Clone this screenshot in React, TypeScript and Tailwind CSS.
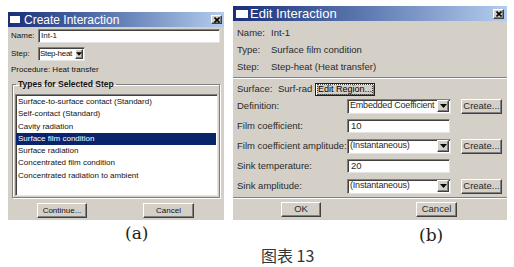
import React from "react";

const raised =
  "bg-[#d4d0c8] border border-t-white border-l-white border-r-[#404040] border-b-[#404040] shadow-[inset_-1px_-1px_0_#808080]";
const sunken =
  "bg-white border border-t-[#808080] border-l-[#808080] border-r-[#e4e4e4] border-b-[#e4e4e4] shadow-[inset_1px_1px_0_#404040]";

function Arrow({ className }: { className: string }) {
  return (
    <div className={`${raised} flex items-center justify-center shrink-0 ${className}`}>
      <svg width="7" height="4" viewBox="0 0 7 4">
        <polygon points="0,0 7,0 3.5,4" fill="#000" />
      </svg>
    </div>
  );
}

function Close({ className }: { className: string }) {
  return (
    <div className={`${raised} flex items-center justify-center shrink-0 ${className}`}>
      <svg width="6" height="6" viewBox="0 0 6 6">
        <path d="M0.5 0.5 L5.5 5.5 M5.5 0.5 L0.5 5.5" stroke="#000" strokeWidth="1.6" />
      </svg>
    </div>
  );
}

const listItems = [
  "Surface-to-surface contact (Standard)",
  "Self-contact (Standard)",
  "Cavity radiation",
  "Surface film condition",
  "Surface radiation",
  "Concentrated film condition",
  "Concentrated radiation to ambient",
];

function DialogA() {
  return (
    <div className="w-[216px] h-[208px] bg-[#d4d0c8] flex flex-col text-[8px] text-[#111]">
      <div className="h-[15px] flex items-center bg-linear-to-r from-[#1a2f78] to-[#b4cdee] pl-[2px] pr-[2px]">
        <div className="w-[10px] h-[7px] bg-white" />
        <span className="ml-[4px] text-white text-[12px] leading-none">Create Interaction</span>
        <Close className="ml-auto w-[11px] h-[9px]" />
      </div>
      <div className="flex items-center h-[14px] mt-[2px] pl-[3px] pr-[4px]">
        <span className="w-[27px]">Name:</span>
        <div className={`${sunken} flex-1 h-full flex items-center pl-[2px]`}>Int-1</div>
      </div>
      <div className="flex items-center h-[14px] mt-[4px] pl-[3px]">
        <span className="w-[27px]">Step:</span>
        <div className={`${sunken} w-[47px] h-full flex items-center pl-[1px] pr-[1px]`}>
          <span className="flex-1 whitespace-nowrap tracking-[-0.3px]">Step-heat</span>
          <Arrow className="w-[8px] h-[10px]" />
        </div>
      </div>
      <div className="h-[12px] mt-[3px] pl-[3px] flex items-center whitespace-nowrap">Procedure: Heat transfer</div>
      <fieldset className="mx-[4px] mt-[3px] border border-[#808080] shadow-[1px_1px_0_white,inset_1px_1px_0_white] pl-[2px] pr-[1px] pb-[1px] pt-0 min-w-0">
        <legend className="ml-[1px] px-[2px] text-[8.5px] font-bold leading-[10px]">Types for Selected Step</legend>
        <div className={`${sunken} h-[102px] mt-[5px] pt-[1px] pr-[1px]`}>
          {listItems.map((t, i) => (
            <div
              key={t}
              className={`h-[12.3px] leading-[12.3px] pl-[2px] whitespace-nowrap ${
                i === 3 ? "bg-[#0a246a] text-white" : ""
              }`}
            >
              {t}
            </div>
          ))}
        </div>
      </fieldset>
      <div className="flex mt-[5px] pl-[29px] gap-[56px]">
        <div className={`${raised} w-[50px] h-[15px] flex items-center justify-center whitespace-nowrap`}>Continue...</div>
        <div className={`${raised} w-[51px] h-[15px] flex items-center justify-center`}>Cancel</div>
      </div>
    </div>
  );
}

function InfoRow({ label, value }: { label: string; value: string }) {
  return (
    <div className="h-[17px] flex items-center pl-[4px] whitespace-nowrap">
      <span className="w-[34px]">{label}</span>
      <span>{value}</span>
    </div>
  );
}

function Create() {
  return (
    <div className={`${raised} ml-[10px] w-[41px] h-[15px] flex items-center justify-center whitespace-nowrap`}>Create...</div>
  );
}

function ComboRow({ label, value }: { label: string; value: string }) {
  return (
    <div className="h-[20px] flex items-center pl-[4px]">
      <span className="w-[110px] whitespace-nowrap">{label}</span>
      <div className={`${sunken} w-[104px] h-[15px] flex items-center pl-[2px] pr-[1px]`}>
        <span className="flex-1 whitespace-nowrap text-[9px] tracking-[-0.2px]">{value}</span>
        <Arrow className="w-[12px] h-[12px]" />
      </div>
      <Create />
    </div>
  );
}

function InputRow({ label, value }: { label: string; value: string }) {
  return (
    <div className="h-[20px] flex items-center pl-[4px]">
      <span className="w-[110px] whitespace-nowrap">{label}</span>
      <div className={`${sunken} w-[103px] h-[14px] flex items-center pl-[3px]`}>{value}</div>
    </div>
  );
}

function DialogB() {
  return (
    <div className="w-[274px] h-[214px] bg-[#d4d0c8] flex flex-col text-[9.5px] text-[#2a2a2a]">
      <div className="h-[15px] flex items-center bg-linear-to-r from-[#1a2f78] to-[#b4cdee] pl-[3px] pr-[3px]">
        <div className="w-[12px] h-[8px] bg-white" />
        <span className="ml-[2px] text-white text-[13px] leading-none">Edit Interaction</span>
        <Close className="ml-auto w-[11px] h-[10px]" />
      </div>
      <div className="mt-[4px]">
        <InfoRow label="Name:" value="Int-1" />
        <InfoRow label="Type:" value="Surface film condition" />
        <InfoRow label="Step:" value="Step-heat (Heat transfer)" />
      </div>
      <div className="mt-[1px] h-[2px] border-t border-t-[#808080] border-b border-b-white" />
      <div className="mt-[4px] h-[13px] flex items-center pl-[4px] whitespace-nowrap">
        <span className="w-[41px]">Surface:</span>
        <span className="w-[37px]">Surf-rad</span>
        <div className="w-[60px] h-[13px] flex items-center justify-center bg-[#d4d0c8] border border-[#202020] shadow-[inset_1px_1px_0_white,inset_-1px_-1px_0_#808080]">
          <span className="border border-dotted border-[#404040] leading-[9px] text-[9px] text-black">Edit Region...</span>
        </div>
      </div>
      <div>
        <ComboRow label="Definition:" value="Embedded Coefficient" />
        <InputRow label="Film coefficient:" value="10" />
        <ComboRow label="Film coefficient amplitude:" value="(Instantaneous)" />
        <InputRow label="Sink temperature:" value="20" />
        <ComboRow label="Sink amplitude:" value="(Instantaneous)" />
      </div>
      <div className="mt-[1px] h-[2px] border-t border-t-[#808080] border-b border-b-white" />
      <div className="flex mt-[3px] pl-[48px] gap-[95px]">
        <div className={`${raised} w-[40px] h-[15px] flex items-center justify-center`}>OK</div>
        <div className={`${raised} w-[41px] h-[15px] flex items-center justify-center`}>Cancel</div>
      </div>
    </div>
  );
}

export default function App() {
  return (
    <div className="w-[514px] h-[267px] bg-white flex items-start pl-[8px] overflow-hidden font-['Liberation_Sans',Arial,sans-serif]">
      <div className="flex flex-col pt-[12px]">
        <DialogA />
        <div className="mt-[3px] h-[20px] leading-[20px] pl-[117px] text-[17px] text-[#222] font-['DejaVu_Serif',serif]">
          (a)
        </div>
      </div>
      <div className="flex flex-col ml-[9px] pt-[6px]">
        <DialogB />
        <div className="mt-[5px] h-[20px] leading-[20px] pl-[186px] text-[17px] text-[#222] font-['DejaVu_Serif',serif]">
          (b)
        </div>
        <div className="mt-[1px] h-[18px] leading-[18px] pl-[28px] text-[16px] text-[#333] font-['Noto_Sans_CJK_SC','Noto_Sans',sans-serif]">
          图表 13
        </div>
      </div>
    </div>
  );
}
